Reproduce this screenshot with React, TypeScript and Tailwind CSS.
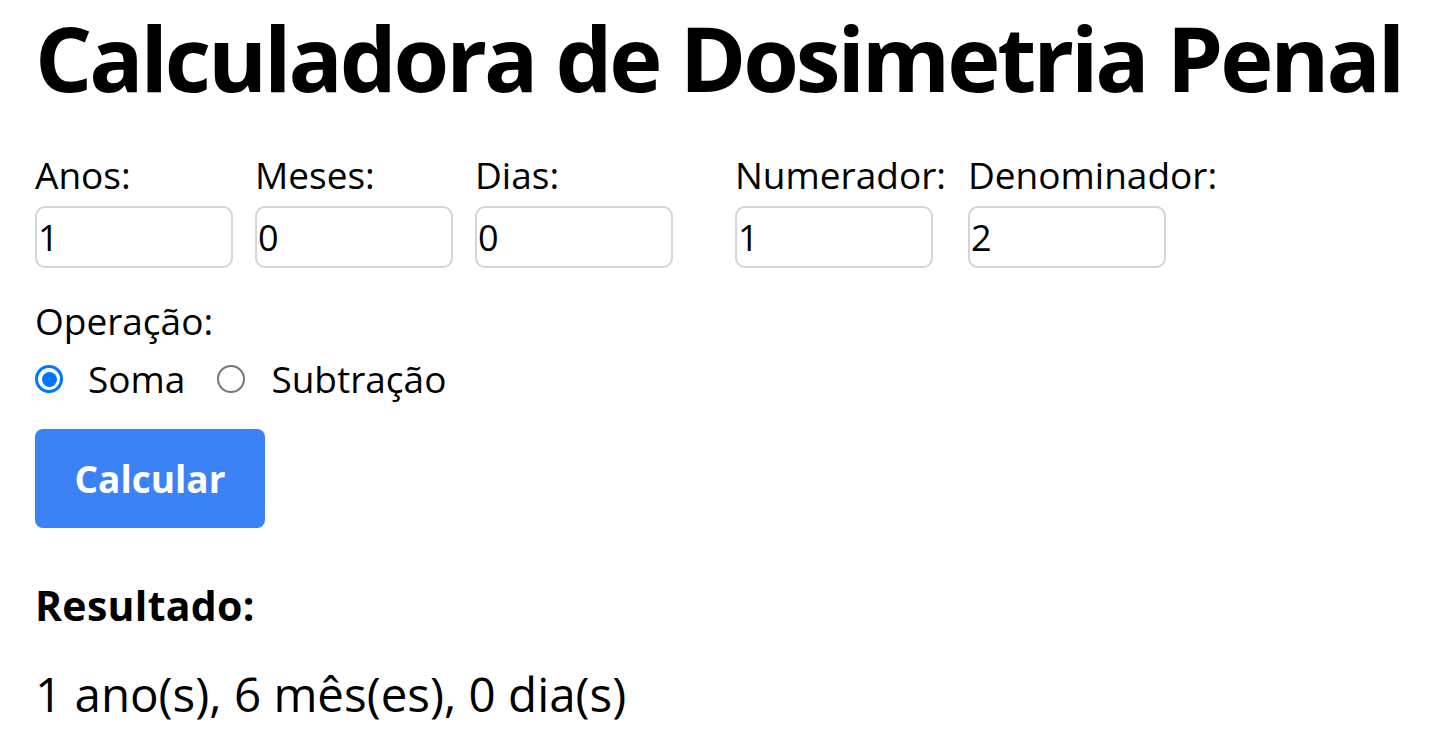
import React from "react";

const font = { fontFamily: '"Open Sans", "Noto Sans", sans-serif' };

function Field({ label, value }: { label: string; value: string }) {
  return (
    <div className="flex flex-col">
      <label className="text-[37px] leading-[40px] mb-[11px] whitespace-nowrap">{label}</label>
      <input
        type="text"
        defaultValue={value}
        className="w-[198px] h-[62px] border-2 border-[#d4d4d4] rounded-[10px] pl-[1px] text-[36px] leading-[40px] outline-none"
      />
    </div>
  );
}

function Radio({ checked }: { checked?: boolean }) {
  return checked ? (
    <span className="w-[28px] h-[28px] rounded-full border-[3px] border-[#0075ff] flex items-center justify-center shrink-0">
      <span className="w-[15px] h-[15px] rounded-full bg-[#0075ff]" />
    </span>
  ) : (
    <span className="w-[28px] h-[28px] rounded-full border-2 border-[#767676] shrink-0" />
  );
}

export default function App() {
  return (
    <div className="bg-white text-black min-h-[753px] px-[35px] pt-[12px]" style={font}>
      <h1 className="text-[90px] leading-[90px] font-bold whitespace-nowrap tracking-[-3.1px]">
        Calculadora de Dosimetria Penal
      </h1>
      <div className="flex mt-[53px] gap-[22px]">
        <Field label="Anos:" value="1" />
        <Field label="Meses:" value="0" />
        <Field label="Dias:" value="0" />
        <div className="flex gap-[22px] ml-[40px]">
          <Field label="Numerador:" value="1" />
          <Field label="Denominador:" value="2" />
        </div>
      </div>
      <div className="mt-[33px] text-[37px] leading-[40px]">Operação:</div>
      <div className="flex items-center mt-[18px] h-[40px] text-[37px] leading-[40px]">
        <label className="flex items-center">
          <Radio checked />
          <span className="ml-[25px]">Soma</span>
        </label>
        <label className="flex items-center ml-[32px]">
          <Radio />
          <span className="ml-[26px]">Subtração</span>
        </label>
      </div>
      <button className="mt-[30px] w-[230px] h-[99px] bg-[#3b82f6] text-white font-bold text-[37px] rounded-[8px]">
        Calcular
      </button>
      <h3 className="mt-[55px] text-[41px] leading-[44px] font-bold tracking-[0.3px]">Resultado:</h3>
      <p className="mt-[40px] text-[47.5px] leading-[54px]">1 ano(s), 6 mês(es), 0 dia(s)</p>
    </div>
  );
}
